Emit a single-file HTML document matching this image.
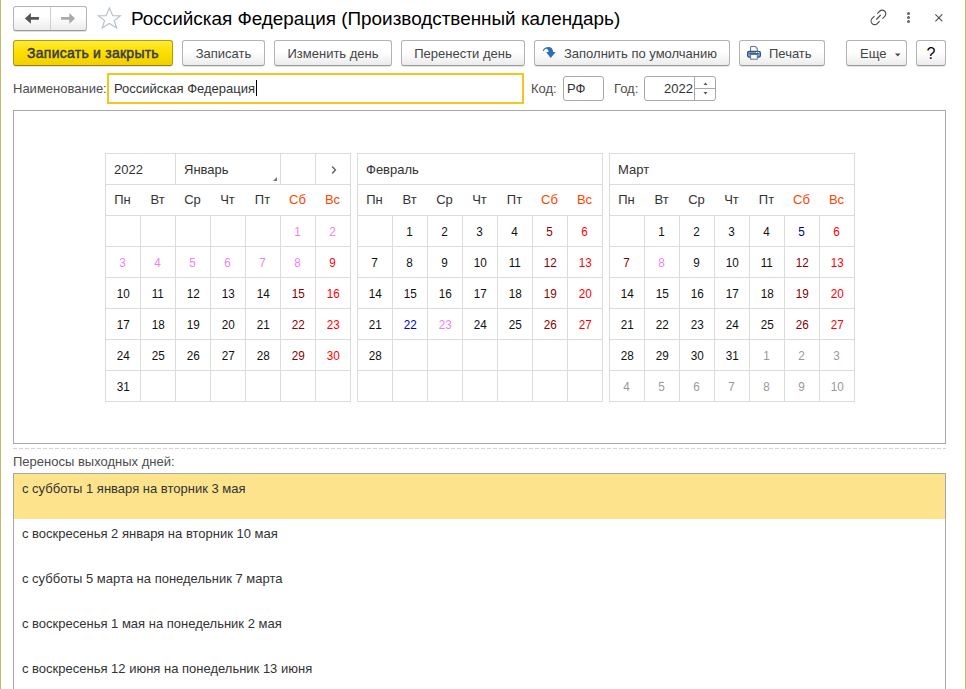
<!DOCTYPE html>
<html><head><meta charset="utf-8"><style>
*{box-sizing:border-box;margin:0;padding:0}
html,body{width:966px;height:689px;overflow:hidden;background:#fff}
body{position:relative;font-family:"Liberation Sans", sans-serif;font-size:13px;color:#333}
.abs{position:absolute}
.edgeL{position:absolute;left:0;top:0;width:1px;height:689px;background:#c9b868}
.edgeR{position:absolute;left:965px;top:0;width:1px;height:689px;background:#c9b868}
.nav{position:absolute;left:13px;top:6px;width:74px;height:25px;border:1px solid #b4b4b4;border-bottom-color:#9a9a9a;border-radius:3px;background:linear-gradient(#fff 40%,#ececec);box-shadow:0 1px 0 rgba(0,0,0,0.12)}
.title{position:absolute;left:131px;top:7px;font-size:18.9px;line-height:24px;color:#000;white-space:nowrap}
.btn{position:absolute;top:40px;height:26px;border:1px solid #b3b3b3;border-bottom-color:#999;border-radius:3px;background:linear-gradient(#fff 45%,#ececec);box-shadow:0 1px 0 rgba(0,0,0,0.10);white-space:nowrap;color:#444;line-height:24px;padding-top:1px;text-align:center}
.btn.y{background:linear-gradient(#ffea3a 0%,#fde000 45%,#f0d000);border-color:#b69c00;border-bottom-color:#9a8200;color:#3a3a48;font-size:14px;letter-spacing:0.25px;padding-top:0;-webkit-text-stroke:0.5px #3a3a48}
.lbl{position:absolute;white-space:nowrap;color:#4d4d4d;line-height:15px}
.inp{position:absolute;border:1px solid #a9a9a9;border-radius:3px;background:#fff}
.group{position:absolute;left:13px;top:110px;width:933px;height:334px;border:1px solid #a7a7a7}
.cal{position:absolute;width:246px;height:249px;border:1px solid #dcdcdc;border-top:none;border-left:none}
.chead{position:absolute;left:0;top:0;width:246px;height:32px;border:1px solid #dcdcdc;border-right:none}
.hc{position:absolute;top:0;height:31px}
.ht{position:absolute;left:8px;top:8px;line-height:15px;color:#333;white-space:nowrap}
.tri{position:absolute;right:3px;bottom:4px;width:0;height:0;border-left:4px solid transparent;border-bottom:4px solid #777}
.wrow{position:absolute;left:0;top:31px;width:246px;height:32px;border-left:1px solid #dcdcdc;border-bottom:1px solid #dcdcdc}
.wd{position:absolute;top:8px;width:35px;text-align:center;line-height:15px;color:#333}
.wd.we{color:#ff4500}
.d{position:absolute;width:36px;height:32px;border:1px solid #dcdcdc;text-align:center;line-height:30px;padding-top:1px;color:#111}
.d span{display:inline-block;transform:scaleX(0.9)}
.d.sat{color:#8b0000}
.d.sun{color:#f00}
.d.hol{color:#ee82ee}
.d.pre{color:#0000c8}
.d.navy{color:#00008b}
.d.oth{color:#999}
.dash{position:absolute;left:13px;top:448px;width:933px;height:1px;background:repeating-linear-gradient(90deg,#d4d4d4 0 4px,transparent 4px 6px)}
.list{position:absolute;left:13px;top:473px;width:933px;height:230px;border:1px solid #a7a7a7}
.lr{position:absolute;left:0;width:931px;height:45px}
.lr.sel{background:#fde38c}
.lr span{position:absolute;left:8px;top:7px;line-height:15px;color:#333;white-space:nowrap}
</style></head><body>
<div class="edgeL"></div><div class="edgeR"></div>
<div class="nav">
 <div class="abs" style="left:36px;top:0;width:1px;height:23px;background:#cfcfcf"></div>
 <svg class="abs" style="left:10px;top:5px" width="16" height="13" viewBox="0 0 16 13"><path d="M0.9 6.4 L6.9 0.9 L6.9 5.1 L14.9 5.1 L14.9 7.75 L6.9 7.75 L6.9 11.8 Z" fill="#555"/></svg>
 <svg class="abs" style="left:46px;top:5px" width="16" height="13" viewBox="0 0 16 13"><path d="M1.1 5.1 L9.3 5.1 L9.3 0.9 L15 6.4 L9.3 11.8 L9.3 7.75 L1.1 7.75 Z" fill="#aaa"/></svg>
</div>
<svg class="abs" style="left:94px;top:4px" width="32" height="28" viewBox="0 0 32 28"><path d="M15.4 4 L18.7 11.6 L26.4 11.8 L20.2 16.6 L22.7 24 L15.4 19.5 L8.1 24 L10.6 16.6 L4.4 11.8 L12.1 11.6 Z" fill="none" stroke="#b5bec8" stroke-width="1.1"/></svg>
<div class="title">Российская Федерация (Производственный календарь)</div>
<svg class="abs" style="left:866px;top:4px" width="26" height="26" viewBox="0 0 26 26"><g fill="none" stroke="#4d4d4d" stroke-width="1.15"><path d="M11.3 9.6 L13.65 7.25 A3.6 3.6 0 0 1 18.75 12.35 L16.45 14.65"/><path d="M8.45 12.15 L6.15 14.45 A3.6 3.6 0 0 0 11.25 19.55 L13.55 17.25"/><path d="M10.3 15.5 L14.7 11"/></g></svg>
<div class="abs" style="left:907px;top:12px;width:3px;height:3px;border-radius:50%;background:#666"></div>
<div class="abs" style="left:907px;top:16px;width:3px;height:3px;border-radius:50%;background:#666"></div>
<div class="abs" style="left:907px;top:20px;width:3px;height:3px;border-radius:50%;background:#666"></div>
<svg class="abs" style="left:934px;top:13px" width="10" height="10" viewBox="0 0 10 10"><path d="M1.4 1.4 L8.3 8.3 M8.3 1.4 L1.4 8.3" stroke="#4a4a4a" stroke-width="1.05"/></svg>

<div class="btn y" style="left:13px;width:160px">Записать и закрыть</div>
<div class="btn" style="left:182px;width:83px">Записать</div>
<div class="btn" style="left:274px;width:118px">Изменить день</div>
<div class="btn" style="left:401px;width:124px">Перенести день</div>
<div class="btn" style="left:534px;width:196px;text-align:left;padding-left:29px">Заполнить по умолчанию
 </div>
<div class="btn" style="left:739px;width:86px;text-align:left;padding-left:29px">Печать
 </div>
<div class="btn" style="left:846px;width:61px;text-align:left;padding-left:13px">Еще
 <svg class="abs" style="left:47px;top:12px" width="7" height="4" viewBox="0 0 7 4"><path d="M1 0.5 L6.5 0.5 L3.75 3.5 Z" fill="#4a4a4a"/></svg></div>
<div class="btn" style="left:916px;width:30px;color:#000;font-size:16px"><span style="position:relative;top:0px">?</span></div>

<svg class="abs" style="left:530px;top:36px" width="30" height="30" viewBox="0 0 30 30"><path d="M12.8 14.9 C13.2 12.4 15.8 11 18.6 11 C21.2 11 23 12.8 23.2 16.1 L25.7 16.1 L20.7 21.9 L16.1 16.1 L18.6 16.1 C18.4 14.3 17.6 12.7 16.2 12.7 C15.2 12.7 14.4 13.5 14 14.9 Z" fill="#2a6fb3"/></svg>
<svg class="abs" style="left:735px;top:36px" width="30" height="30" viewBox="0 0 30 30"><path d="M15.6 10.5 L20.8 10.5 L22.3 12.2 L22.3 15.5 L15.6 15.5 Z" fill="#fff" stroke="#5b7598" stroke-width="1"/><path d="M20.6 10.5 L22.3 12.4 L20.6 12.4 Z" fill="#5b7598"/><rect x="12.6" y="15.3" width="12.8" height="5.9" rx="1.6" fill="#7ea3cf" stroke="#2b5282" stroke-width="1.2"/><rect x="14" y="16.9" width="10" height="0.9" fill="#2b5282"/><rect x="21" y="15.9" width="1.1" height="1" fill="#fff"/><rect x="23" y="15.9" width="1.1" height="1" fill="#fff"/><rect x="15.6" y="18.5" width="6.7" height="4.7" fill="#fff" stroke="#5b7598" stroke-width="1"/></svg>
<div class="lbl" style="left:13px;top:81px">Наименование:</div>
<div class="inp" style="left:107px;top:73px;width:417px;height:31px;border:2px solid #f8c31e;border-radius:0"></div>
<div class="lbl" style="left:114px;top:81px;color:#333">Российская Федерация<span style="display:inline-block;width:1px;height:16px;background:#000;vertical-align:top;margin-left:1px;position:relative;top:-1px"></span></div>
<div class="lbl" style="left:531px;top:81px">Код:</div>
<div class="inp" style="left:563px;top:76px;width:41px;height:25px"></div>
<div class="lbl" style="left:567px;top:81px;color:#333">РФ</div>
<div class="lbl" style="left:614px;top:81px">Год:</div>
<div class="inp" style="left:644px;top:76px;width:72px;height:25px">
 <div class="abs" style="left:49px;top:0;width:1px;height:23px;background:#a9a9a9"></div>
 <div class="abs" style="left:50px;top:11px;width:20px;height:1px;background:#a9a9a9"></div>
 <svg class="abs" style="left:58px;top:5px" width="5" height="3" viewBox="0 0 5 3"><path d="M0.5 3 L4.5 3 L2.5 0.5 Z" fill="#555"/></svg>
 <svg class="abs" style="left:58px;top:15px" width="5" height="3" viewBox="0 0 5 3"><path d="M0.5 0 L4.5 0 L2.5 2.5 Z" fill="#555"/></svg>
</div>
<div class="lbl" style="left:664px;top:81px;color:#333">2022</div>

<div class="group"></div>
<div class="cal" style="left:105px;top:153px">
<div class="chead">
<div class="hc" style="left:0;width:70px"><span class="ht">2022</span></div>
<div class="hc" style="left:69px;width:105px;border-left:1px solid #dcdcdc"><span class="ht">Январь</span><span class="tri"></span></div>
<div class="hc" style="left:174px;width:35px;border-left:1px solid #dcdcdc"></div>
<div class="hc" style="left:209px;width:36px;border-left:1px solid #dcdcdc"><svg style="position:absolute;left:15px;top:11px" width="6" height="10" viewBox="0 0 6 10"><path d="M1.2 1.5 L4.4 5 L1.2 8.5" stroke="#666" stroke-width="1.5" fill="none"/></svg></div>
</div>
<div class="wrow">
<span class="wd" style="left:-1px">Пн</span>
<span class="wd" style="left:34px">Вт</span>
<span class="wd" style="left:69px">Ср</span>
<span class="wd" style="left:104px">Чт</span>
<span class="wd" style="left:139px">Пт</span>
<span class="wd we" style="left:174px">Сб</span>
<span class="wd we" style="left:209px">Вс</span>
</div>
<div class="d" style="left:0px;top:62px"></div>
<div class="d" style="left:35px;top:62px"></div>
<div class="d" style="left:70px;top:62px"></div>
<div class="d" style="left:105px;top:62px"></div>
<div class="d" style="left:140px;top:62px"></div>
<div class="d hol" style="left:175px;top:62px"><span>1</span></div>
<div class="d hol" style="left:210px;top:62px"><span>2</span></div>
<div class="d hol" style="left:0px;top:93px"><span>3</span></div>
<div class="d hol" style="left:35px;top:93px"><span>4</span></div>
<div class="d hol" style="left:70px;top:93px"><span>5</span></div>
<div class="d hol" style="left:105px;top:93px"><span>6</span></div>
<div class="d hol" style="left:140px;top:93px"><span>7</span></div>
<div class="d hol" style="left:175px;top:93px"><span>8</span></div>
<div class="d sun" style="left:210px;top:93px"><span>9</span></div>
<div class="d n" style="left:0px;top:124px"><span>10</span></div>
<div class="d n" style="left:35px;top:124px"><span>11</span></div>
<div class="d n" style="left:70px;top:124px"><span>12</span></div>
<div class="d n" style="left:105px;top:124px"><span>13</span></div>
<div class="d n" style="left:140px;top:124px"><span>14</span></div>
<div class="d sat" style="left:175px;top:124px"><span>15</span></div>
<div class="d sun" style="left:210px;top:124px"><span>16</span></div>
<div class="d n" style="left:0px;top:155px"><span>17</span></div>
<div class="d n" style="left:35px;top:155px"><span>18</span></div>
<div class="d n" style="left:70px;top:155px"><span>19</span></div>
<div class="d n" style="left:105px;top:155px"><span>20</span></div>
<div class="d n" style="left:140px;top:155px"><span>21</span></div>
<div class="d sat" style="left:175px;top:155px"><span>22</span></div>
<div class="d sun" style="left:210px;top:155px"><span>23</span></div>
<div class="d n" style="left:0px;top:186px"><span>24</span></div>
<div class="d n" style="left:35px;top:186px"><span>25</span></div>
<div class="d n" style="left:70px;top:186px"><span>26</span></div>
<div class="d n" style="left:105px;top:186px"><span>27</span></div>
<div class="d n" style="left:140px;top:186px"><span>28</span></div>
<div class="d sat" style="left:175px;top:186px"><span>29</span></div>
<div class="d sun" style="left:210px;top:186px"><span>30</span></div>
<div class="d n" style="left:0px;top:217px"><span>31</span></div>
<div class="d" style="left:35px;top:217px"></div>
<div class="d" style="left:70px;top:217px"></div>
<div class="d" style="left:105px;top:217px"></div>
<div class="d" style="left:140px;top:217px"></div>
<div class="d" style="left:175px;top:217px"></div>
<div class="d" style="left:210px;top:217px"></div>
</div><div class="cal" style="left:357px;top:153px">
<div class="chead"><div class="hc" style="left:0;width:245px"><span class="ht">Февраль</span></div></div>
<div class="wrow">
<span class="wd" style="left:-1px">Пн</span>
<span class="wd" style="left:34px">Вт</span>
<span class="wd" style="left:69px">Ср</span>
<span class="wd" style="left:104px">Чт</span>
<span class="wd" style="left:139px">Пт</span>
<span class="wd we" style="left:174px">Сб</span>
<span class="wd we" style="left:209px">Вс</span>
</div>
<div class="d" style="left:0px;top:62px"></div>
<div class="d n" style="left:35px;top:62px"><span>1</span></div>
<div class="d n" style="left:70px;top:62px"><span>2</span></div>
<div class="d n" style="left:105px;top:62px"><span>3</span></div>
<div class="d n" style="left:140px;top:62px"><span>4</span></div>
<div class="d sat" style="left:175px;top:62px"><span>5</span></div>
<div class="d sun" style="left:210px;top:62px"><span>6</span></div>
<div class="d n" style="left:0px;top:93px"><span>7</span></div>
<div class="d n" style="left:35px;top:93px"><span>8</span></div>
<div class="d n" style="left:70px;top:93px"><span>9</span></div>
<div class="d n" style="left:105px;top:93px"><span>10</span></div>
<div class="d n" style="left:140px;top:93px"><span>11</span></div>
<div class="d sat" style="left:175px;top:93px"><span>12</span></div>
<div class="d sun" style="left:210px;top:93px"><span>13</span></div>
<div class="d n" style="left:0px;top:124px"><span>14</span></div>
<div class="d n" style="left:35px;top:124px"><span>15</span></div>
<div class="d n" style="left:70px;top:124px"><span>16</span></div>
<div class="d n" style="left:105px;top:124px"><span>17</span></div>
<div class="d n" style="left:140px;top:124px"><span>18</span></div>
<div class="d sat" style="left:175px;top:124px"><span>19</span></div>
<div class="d sun" style="left:210px;top:124px"><span>20</span></div>
<div class="d n" style="left:0px;top:155px"><span>21</span></div>
<div class="d pre" style="left:35px;top:155px"><span>22</span></div>
<div class="d hol" style="left:70px;top:155px"><span>23</span></div>
<div class="d n" style="left:105px;top:155px"><span>24</span></div>
<div class="d n" style="left:140px;top:155px"><span>25</span></div>
<div class="d sat" style="left:175px;top:155px"><span>26</span></div>
<div class="d sun" style="left:210px;top:155px"><span>27</span></div>
<div class="d n" style="left:0px;top:186px"><span>28</span></div>
<div class="d" style="left:35px;top:186px"></div>
<div class="d" style="left:70px;top:186px"></div>
<div class="d" style="left:105px;top:186px"></div>
<div class="d" style="left:140px;top:186px"></div>
<div class="d" style="left:175px;top:186px"></div>
<div class="d" style="left:210px;top:186px"></div>
<div class="d" style="left:0px;top:217px"></div>
<div class="d" style="left:35px;top:217px"></div>
<div class="d" style="left:70px;top:217px"></div>
<div class="d" style="left:105px;top:217px"></div>
<div class="d" style="left:140px;top:217px"></div>
<div class="d" style="left:175px;top:217px"></div>
<div class="d" style="left:210px;top:217px"></div>
</div><div class="cal" style="left:609px;top:153px">
<div class="chead"><div class="hc" style="left:0;width:245px"><span class="ht">Март</span></div></div>
<div class="wrow">
<span class="wd" style="left:-1px">Пн</span>
<span class="wd" style="left:34px">Вт</span>
<span class="wd" style="left:69px">Ср</span>
<span class="wd" style="left:104px">Чт</span>
<span class="wd" style="left:139px">Пт</span>
<span class="wd we" style="left:174px">Сб</span>
<span class="wd we" style="left:209px">Вс</span>
</div>
<div class="d" style="left:0px;top:62px"></div>
<div class="d n" style="left:35px;top:62px"><span>1</span></div>
<div class="d n" style="left:70px;top:62px"><span>2</span></div>
<div class="d n" style="left:105px;top:62px"><span>3</span></div>
<div class="d n" style="left:140px;top:62px"><span>4</span></div>
<div class="d navy" style="left:175px;top:62px"><span>5</span></div>
<div class="d sun" style="left:210px;top:62px"><span>6</span></div>
<div class="d sat" style="left:0px;top:93px"><span>7</span></div>
<div class="d hol" style="left:35px;top:93px"><span>8</span></div>
<div class="d n" style="left:70px;top:93px"><span>9</span></div>
<div class="d n" style="left:105px;top:93px"><span>10</span></div>
<div class="d n" style="left:140px;top:93px"><span>11</span></div>
<div class="d sat" style="left:175px;top:93px"><span>12</span></div>
<div class="d sun" style="left:210px;top:93px"><span>13</span></div>
<div class="d n" style="left:0px;top:124px"><span>14</span></div>
<div class="d n" style="left:35px;top:124px"><span>15</span></div>
<div class="d n" style="left:70px;top:124px"><span>16</span></div>
<div class="d n" style="left:105px;top:124px"><span>17</span></div>
<div class="d n" style="left:140px;top:124px"><span>18</span></div>
<div class="d sat" style="left:175px;top:124px"><span>19</span></div>
<div class="d sun" style="left:210px;top:124px"><span>20</span></div>
<div class="d n" style="left:0px;top:155px"><span>21</span></div>
<div class="d n" style="left:35px;top:155px"><span>22</span></div>
<div class="d n" style="left:70px;top:155px"><span>23</span></div>
<div class="d n" style="left:105px;top:155px"><span>24</span></div>
<div class="d n" style="left:140px;top:155px"><span>25</span></div>
<div class="d sat" style="left:175px;top:155px"><span>26</span></div>
<div class="d sun" style="left:210px;top:155px"><span>27</span></div>
<div class="d n" style="left:0px;top:186px"><span>28</span></div>
<div class="d n" style="left:35px;top:186px"><span>29</span></div>
<div class="d n" style="left:70px;top:186px"><span>30</span></div>
<div class="d n" style="left:105px;top:186px"><span>31</span></div>
<div class="d oth" style="left:140px;top:186px"><span>1</span></div>
<div class="d oth" style="left:175px;top:186px"><span>2</span></div>
<div class="d oth" style="left:210px;top:186px"><span>3</span></div>
<div class="d oth" style="left:0px;top:217px"><span>4</span></div>
<div class="d oth" style="left:35px;top:217px"><span>5</span></div>
<div class="d oth" style="left:70px;top:217px"><span>6</span></div>
<div class="d oth" style="left:105px;top:217px"><span>7</span></div>
<div class="d oth" style="left:140px;top:217px"><span>8</span></div>
<div class="d oth" style="left:175px;top:217px"><span>9</span></div>
<div class="d oth" style="left:210px;top:217px"><span>10</span></div>
</div>
<div class="dash"></div>
<div class="lbl" style="left:13px;top:454px">Переносы выходных дней:</div>
<div class="list"><div class="lr sel" style="top:0px"><span>с субботы 1 января на вторник 3 мая</span></div><div class="lr" style="top:45px"><span>с воскресенья 2 января на вторник 10 мая</span></div><div class="lr" style="top:90px"><span>с субботы 5 марта на понедельник 7 марта</span></div><div class="lr" style="top:135px"><span>с воскресенья 1 мая на понедельник 2 мая</span></div><div class="lr" style="top:180px"><span>с воскресенья 12 июня на понедельник 13 июня</span></div></div>
</body></html>
